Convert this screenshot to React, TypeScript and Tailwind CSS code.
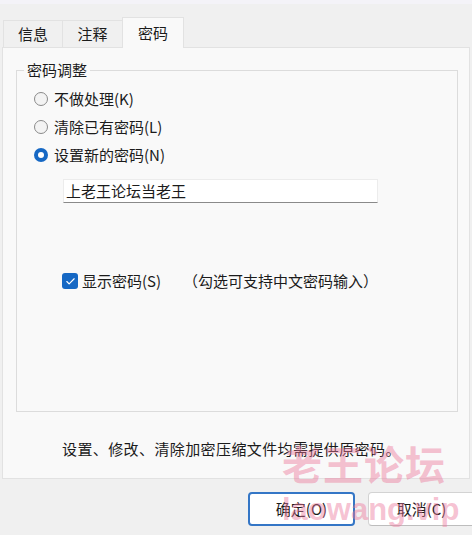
import { Check } from "lucide-react";

function Radio({ label, checked }: { label: string; checked?: boolean }) {
    return (
        <div className="flex items-center h-[28px]">
            {checked ? (
                <span className="w-[14px] h-[14px] rounded-full bg-[#1668c4] flex items-center justify-center">
                    <span className="w-[6px] h-[6px] rounded-full bg-white" />
                </span>
            ) : (
                <span className="w-[14px] h-[14px] rounded-full border border-[#8a8a8a] bg-[#f3f3f3]" />
            )}
            <span className="ml-[6px] text-[15px] leading-[20px]">{label}</span>
        </div>
    )
}

function App() {
    return (
        <div
            className="relative w-[472px] h-[535px] overflow-hidden bg-[#f0f0f0] text-[#1b1b1b]"
            style={{ fontFamily: '"Noto Sans CJK SC", "Noto Sans", sans-serif' }}
        >
            <div className="h-[4px] bg-[#f4f3f8]" />

            {/* tabs */}
            <div className="flex items-end h-[43px] pl-[3px]">
                <div className="w-[59px] h-[27px] border-t border-l border-[#e2e2e2] bg-[#f0f0f0] flex items-center justify-center text-[15px] leading-[20px]">信息</div>
                <div className="w-[60px] h-[27px] border-t border-l border-[#e2e2e2] bg-[#f0f0f0] flex items-center justify-center text-[15px] leading-[20px]">注释</div>
                <div className="w-[62px] h-[31px] border-t border-l border-r border-[#e2e2e2] bg-[#f9f9f9] flex items-center justify-center text-[15px] leading-[20px] -mb-[1px] relative z-10">密码</div>
            </div>

            {/* panel */}
            <div className="mx-[2px] h-[432px] border border-[#e2e2e2] bg-[#f9f9f9]">
                <fieldset className="ml-[13px] mt-[14px] w-[442px] h-[350px] border border-[#dcdcdc]">
                    <legend className="ml-[7px] px-[3px] text-[15px] leading-[16px]">密码调整</legend>
                    <div className="pt-[7px] pl-[17px]">
                        <Radio label="不做处理(K)" />
                        <Radio label="清除已有密码(L)" />
                        <Radio label="设置新的密码(N)" checked />

                        <div className="mt-[10px] ml-[29px] w-[315px] h-[24px] bg-white border border-[#ececec] border-b-[#8a8a8a] flex items-center pl-[2px] text-[15px]">
                            上老王论坛当老王
                        </div>

                        <div className="mt-[70px] ml-[28px] flex items-center h-[16px]">
                            <span className="w-[16px] h-[16px] rounded-[3px] bg-[#1668c4] flex items-center justify-center">
                                <Check size={11} strokeWidth={2.5} color="white" />
                            </span>
                            <span className="ml-[4px] w-[101px] text-[15px] leading-[20px]">显示密码(S)</span>
                            <span className="text-[15px] leading-[20px]">（勾选可支持中文密码输入）</span>
                        </div>
                    </div>
                </fieldset>

                <p className="mt-[27px] ml-[59px] text-[15px] leading-[20px] tracking-[0.4px]">
                    设置、修改、清除加密压缩文件均需提供原密码。
                </p>
            </div>

            {/* buttons */}
            <div className="flex gap-[13px] pl-[248px] pt-[13px]">
                <button className="shrink-0 w-[107px] h-[34px] rounded-[4px] bg-white border-2 border-[#3476c6] text-[15px]">确定(O)</button>
                <button className="shrink-0 w-[107px] h-[34px] rounded-[4px] bg-white border border-[#d3d3d3] border-b-[#bdbdbd] text-[15px]">取消(C)</button>
            </div>

            {/* watermark */}
            <div className="absolute left-[282px] top-[438px] pointer-events-none text-[rgba(236,120,155,0.45)] font-bold">
                <div className="text-[40px] leading-[50px] tracking-[1px]">老王论坛</div>
                <div className="mt-[2px] text-[31px] leading-[40px]" style={{ fontFamily: '"Liberation Sans", sans-serif' }}>laowang.vip</div>
            </div>
        </div>
    )
}

export default App;
